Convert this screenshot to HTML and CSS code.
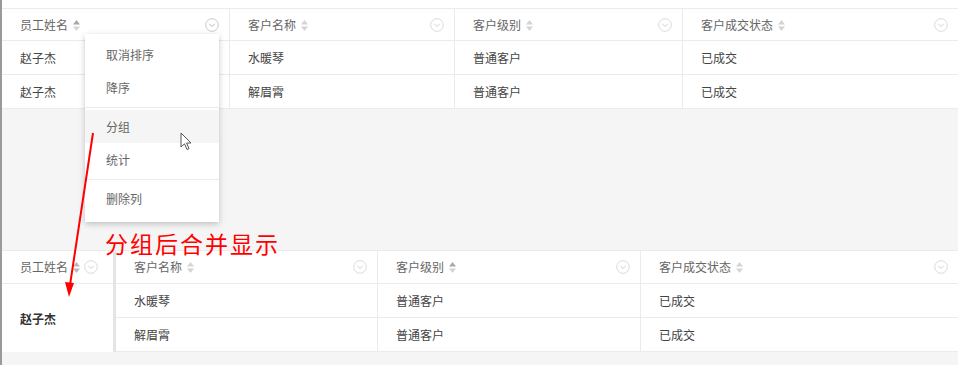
FILE: index.html
```html
<!DOCTYPE html>
<html lang="zh-CN">
<head>
  <meta charset="UTF-8" />
  <title>分组合并显示</title>
  <link rel="stylesheet" href="styles.css">
</head>
<body>
  <div class="page">
    <div class="panel">

      <div class="grid top-table">
        <div class="th">
          <span class="label">员工姓名</span>
          <svg class="sort" width="7" height="11" viewBox="0 0 7 11"><path d="M3.5 0L7 4.5H0Z" fill="#a8a8a8"/><path d="M3.5 11L7 6.5H0Z" fill="#d4d4d4"/></svg>
          <svg class="more" width="14" height="14" viewBox="0 0 14 14"><circle cx="7" cy="7" r="6.3" fill="none" stroke="#c8c8c8"/><path d="M4.3 5.8L7 8.5L9.7 5.8" fill="none" stroke="#b8b8b8"/></svg>
        </div>
        <div class="th">
          <span class="label">客户名称</span>
          <svg class="sort" width="7" height="11" viewBox="0 0 7 11"><path d="M3.5 0L7 4.5H0Z" fill="#d4d4d4"/><path d="M3.5 11L7 6.5H0Z" fill="#d4d4d4"/></svg>
          <svg class="more" width="14" height="14" viewBox="0 0 14 14"><circle cx="7" cy="7" r="6.3" fill="none" stroke="#dadada"/><path d="M4.3 5.8L7 8.5L9.7 5.8" fill="none" stroke="#cfcfcf"/></svg>
        </div>
        <div class="th">
          <span class="label">客户级别</span>
          <svg class="sort" width="7" height="11" viewBox="0 0 7 11"><path d="M3.5 0L7 4.5H0Z" fill="#d4d4d4"/><path d="M3.5 11L7 6.5H0Z" fill="#d4d4d4"/></svg>
          <svg class="more" width="14" height="14" viewBox="0 0 14 14"><circle cx="7" cy="7" r="6.3" fill="none" stroke="#dadada"/><path d="M4.3 5.8L7 8.5L9.7 5.8" fill="none" stroke="#cfcfcf"/></svg>
        </div>
        <div class="th last">
          <span class="label">客户成交状态</span>
          <svg class="sort" width="7" height="11" viewBox="0 0 7 11"><path d="M3.5 0L7 4.5H0Z" fill="#d4d4d4"/><path d="M3.5 11L7 6.5H0Z" fill="#d4d4d4"/></svg>
          <svg class="more" width="14" height="14" viewBox="0 0 14 14"><circle cx="7" cy="7" r="6.3" fill="none" stroke="#dadada"/><path d="M4.3 5.8L7 8.5L9.7 5.8" fill="none" stroke="#cfcfcf"/></svg>
        </div>

        <div class="td">赵子杰</div>
        <div class="td">水暖琴</div>
        <div class="td">普通客户</div>
        <div class="td last">已成交</div>

        <div class="td">赵子杰</div>
        <div class="td">解眉霄</div>
        <div class="td">普通客户</div>
        <div class="td last">已成交</div>
      </div>

      <div class="gap"></div>

      <div class="grid bottom-table">
        <div class="th">
          <span class="label">员工姓名</span>
          <svg class="sort" width="7" height="11" viewBox="0 0 7 11"><path d="M3.5 0L7 4.5H0Z" fill="#b8b8b8"/><path d="M3.5 11L7 6.5H0Z" fill="#b8b8b8"/></svg>
          <svg class="more" width="14" height="14" viewBox="0 0 14 14"><circle cx="7" cy="7" r="6.3" fill="none" stroke="#dadada"/><path d="M4.3 5.8L7 8.5L9.7 5.8" fill="none" stroke="#cfcfcf"/></svg>
        </div>
        <div class="fixed-bar"></div>
        <div class="th">
          <span class="label">客户名称</span>
          <svg class="sort" width="7" height="11" viewBox="0 0 7 11"><path d="M3.5 0L7 4.5H0Z" fill="#d4d4d4"/><path d="M3.5 11L7 6.5H0Z" fill="#d4d4d4"/></svg>
          <svg class="more" width="14" height="14" viewBox="0 0 14 14"><circle cx="7" cy="7" r="6.3" fill="none" stroke="#dadada"/><path d="M4.3 5.8L7 8.5L9.7 5.8" fill="none" stroke="#cfcfcf"/></svg>
        </div>
        <div class="th">
          <span class="label">客户级别</span>
          <svg class="sort" width="7" height="11" viewBox="0 0 7 11"><path d="M3.5 0L7 4.5H0Z" fill="#a8a8a8"/><path d="M3.5 11L7 6.5H0Z" fill="#d4d4d4"/></svg>
          <svg class="more" width="14" height="14" viewBox="0 0 14 14"><circle cx="7" cy="7" r="6.3" fill="none" stroke="#dadada"/><path d="M4.3 5.8L7 8.5L9.7 5.8" fill="none" stroke="#cfcfcf"/></svg>
        </div>
        <div class="th last">
          <span class="label">客户成交状态</span>
          <svg class="sort" width="7" height="11" viewBox="0 0 7 11"><path d="M3.5 0L7 4.5H0Z" fill="#d4d4d4"/><path d="M3.5 11L7 6.5H0Z" fill="#d4d4d4"/></svg>
          <svg class="more" width="14" height="14" viewBox="0 0 14 14"><circle cx="7" cy="7" r="6.3" fill="none" stroke="#dadada"/><path d="M4.3 5.8L7 8.5L9.7 5.8" fill="none" stroke="#cfcfcf"/></svg>
        </div>

        <div class="td merged">赵子杰</div>
        <div class="td">水暖琴</div>
        <div class="td">普通客户</div>
        <div class="td last">已成交</div>

        <div class="td">解眉霄</div>
        <div class="td">普通客户</div>
        <div class="td last">已成交</div>
      </div>
    </div>

    <!-- column menu opened from the first header -->
    <div class="col-menu">
      <div class="menu-item">取消排序</div>
      <div class="menu-item">降序</div>
      <div class="menu-divider"></div>
      <div class="menu-item active">分组</div>
      <div class="menu-item">统计</div>
      <div class="menu-divider"></div>
      <div class="menu-item">删除列</div>
    </div>

    <svg class="cursor" width="14" height="20" viewBox="0 0 14 20">
      <path d="M1 1L1 15L4.5 11.8L7 17.5L9 16.6L6.6 11H11Z" fill="#fff" stroke="#555" stroke-width="1" stroke-linejoin="round"/>
    </svg>

    <svg class="arrow" width="40" height="180" viewBox="0 0 40 180">
      <line x1="36" y1="8" x2="13" y2="160" stroke="#f00" stroke-width="2"/>
      <path d="M12 172L8 157L17 158Z" fill="#f00"/>
    </svg>

    <div class="note">分组后合并显示</div>
  </div>
</body>
</html>
```

FILE: styles.css
```css
body {
  margin: 0;
  font-family: "Noto Sans CJK SC", "Noto Sans", sans-serif;
  font-size: 12px;
  color: #333;
  background-color: #fff;
}

.page {
  position: relative;
  width: 961px;
  height: 365px;
  border-left: 2px solid #9a9a9a;
  padding-top: 8px;
  box-sizing: border-box;
  overflow: hidden;
}

.panel {
  width: 956px;
  height: 357px;
  background-color: #f5f5f5;
}

.grid {
  display: grid;
  background-color: #fff;
  border-top: 1px solid #ebebeb;
}

.top-table {
  grid-template-columns: 228px 225px 228px 1fr;
}

.bottom-table {
  grid-template-columns: 111px 3px 262px 263px 1fr;
  grid-template-rows: 33px 34px 34px;
}

.gap {
  height: 141px;
}

.th, .td {
  display: flex;
  align-items: center;
  border-right: 1px solid #ebebeb;
  border-bottom: 1px solid #ebebeb;
  box-sizing: border-box;
  padding: 0 10px 0 18px;
}

.th.last, .td.last {
  border-right: none;
}

.th {
  height: 32px;
  color: #666;
}

.bottom-table .th {
  height: 33px;
}

.td {
  height: 34px;
  color: #444;
}

.label {
  margin-right: 5px;
  line-height: 12px;
}

.sort {
  margin-top: 1px;
}

.more {
  margin-left: auto;
}

.bottom-table .th:first-child {
  padding-right: 10px;
  border-right: none;
}

.bottom-table .th:first-child .more {
  margin-left: 4px;
}

.fixed-bar {
  grid-row: 1 / span 3;
  grid-column: 2;
  background-color: #e4e4e4;
}

.merged {
  grid-row: 2 / span 2;
  grid-column: 1;
  height: auto;
  border-right: none;
  border-bottom: none;
  font-weight: bold;
  color: #333;
}

.col-menu {
  position: absolute;
  left: 83px;
  top: 34px;
  width: 134px;
  padding: 4px 0 7px;
  background-color: #fff;
  box-shadow: 0 2px 6px rgba(0,0,0,0.22);
}

.menu-item {
  height: 33px;
  line-height: 33px;
  padding-left: 21px;
  color: #666;
}

.menu-item.active {
  background-color: #f5f5f5;
}

.menu-divider {
  height: 1px;
  margin: 3px 0 2px;
  background-color: #ececec;
}

.cursor {
  position: absolute;
  left: 178px;
  top: 132px;
}

.arrow {
  position: absolute;
  left: 55px;
  top: 125px;
}

.note {
  position: absolute;
  left: 103px;
  top: 232px;
  color: #f00;
  font-size: 23px;
  letter-spacing: 2px;
  line-height: 23px;
}
```
